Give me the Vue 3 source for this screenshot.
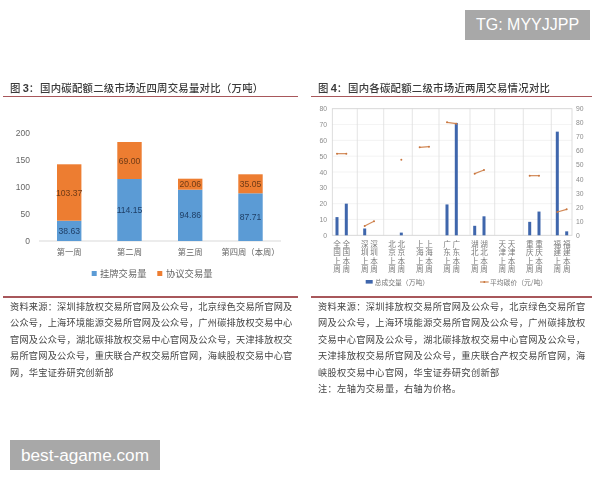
<script setup>
const ticks = [200, 150, 100, 50, 0]
const weeks = [
  { label: '第一周', cx: 69.2, top: 165.3, mid: 221.7, a: '38.63', b: '103.37' },
  { label: '第二周', cx: 129.5, top: 143, mid: 180, a: '114.15', b: '69.00' },
  { label: '第三周', cx: 190.2, top: 179.7, mid: 190.7, a: '94.86', b: '20.06' },
  { label: '第四周（本周）', cx: 250.5, top: 175.3, mid: 194.3, a: '87.71', b: '35.05' }
]
const base = 242

const plotTop = 109.7
const plotBottom = 236.3
const plotLeft = 332.3
const plotRight = 572
const unit = (plotBottom - plotTop) / 80
const leftTicks = [0, 10, 20, 30, 40, 50, 60, 70, 80]
const rightTicks = [0, 10, 20, 30, 40, 50, 60, 70, 80, 90]
const dividers = [357.3, 383.7, 412.3, 439, 470, 494.7, 523.3, 551.3]
const cities = ['全国', '深圳', '北京', '上海', '广东', '湖北', '天津', '重庆', '福建']
const cols = [
  [337, 11.5], [346.3, 20],
  [364.7, 4.3], [374, 0],
  [392, 0], [401.3, 1.7],
  [419.7, 0], [429, 0],
  [447, 19.5], [456.3, 71],
  [474.7, 6], [484, 12],
  [502.3, 0], [511.5, 0],
  [529.7, 8.5], [539, 15],
  [557.3, 65.5], [566.7, 2.5]
].map(([x, v], i) => {
  const city = cities[Math.floor(i / 2)]
  const week = i % 2 === 0 ? '上周' : '本周'
  return { x, h: v * unit, label: city + week }
})
const toX = (z) => z / 3 + 300
const toY = (z) => z / 3 + 70
const segments = [
  [111, 254, 139, 254],
  [194, 471, 222, 457],
  [359, 235, 387, 233],
  [441, 160, 469, 164],
  [524, 314, 552, 303],
  [689, 320, 717, 320],
  [772, 429, 800, 421]
].map(([a, b, c, d]) => ({ x1: toX(a), y1: toY(b), x2: toX(c), y2: toY(d) }))
const dots = [
  ...segments.flatMap((s) => [{ x: s.x1, y: s.y1 }, { x: s.x2, y: s.y2 }]),
  { x: toX(304), y: toY(272) }
]

const sourceLeft = [
  '资料来源：深圳排放权交易所官网及公众号，北京绿色交易所官网及',
  '公众号，上海环境能源交易所官网及公众号，广州碳排放权交易中心',
  '官网及公众号，湖北碳排放权交易中心官网及公众号，天津排放权交',
  '易所官网及公众号，重庆联合产权交易所官网，海峡股权交易中心官',
  '网，华宝证券研究创新部'
]
const sourceRight = [
  '资料来源：深圳排放权交易所官网及公众号，北京绿色交易所官',
  '网及公众号，上海环境能源交易所官网及公众号，广州碳排放权',
  '交易中心官网及公众号，湖北碳排放权交易中心官网及公众号，',
  '天津排放权交易所官网及公众号，重庆联合产权交易所官网，海',
  '峡股权交易中心官网，华宝证券研究创新部',
  '注：左轴为交易量，右轴为价格。'
]
</script>

<template>
  <div class="page">
    <section class="panel">
      <h2 class="title"><span class="prefix">图 <b>3</b>：</span>国内碳配额二级市场近四周交易量对比（万吨）</h2>
      <svg class="chart" viewBox="3 98 295 199" width="295" height="199">
        <text v-for="(t, i) in ticks" :key="t" class="tick" x="30" :y="137 + i * 27" text-anchor="end">{{ t }}</text>
        <line x1="39" x2="281" :y1="base" :y2="base" stroke="#d9d9d9" stroke-width="1" />
        <g v-for="w in weeks" :key="w.label">
          <rect :x="w.cx - 12.2" :y="w.mid" width="24.4" :height="base - w.mid" fill="#5b9bd5" />
          <rect :x="w.cx - 12.2" :y="w.top" width="24.4" :height="w.mid - w.top" fill="#ed7d31" />
          <text class="datum blue" :x="w.cx" :y="(w.mid + base) / 2 + 3" text-anchor="middle">{{ w.a }}</text>
          <text class="datum orange" :x="w.cx" :y="(w.top + w.mid) / 2 + 3" text-anchor="middle">{{ w.b }}</text>
          <text class="cat" :x="w.cx" y="256" text-anchor="middle">{{ w.label }}</text>
        </g>
        <rect x="91.7" y="272" width="5" height="5" fill="#5b9bd5" />
        <text class="legend" x="100" y="278">挂牌交易量</text>
        <rect x="157.3" y="272" width="5" height="5" fill="#ed7d31" />
        <text class="legend" x="166" y="278">协议交易量</text>
      </svg>
      <div class="rule-bottom"></div>
      <p class="source source-left"><span v-for="l in sourceLeft" :key="l" class="line">{{ l }}</span></p>
    </section>

    <section class="panel">
      <h2 class="title"><span class="prefix">图 <b>4</b>：</span>国内各碳配额二级市场近两周交易情况对比</h2>
      <svg class="chart" viewBox="311 98 281 199" width="281" height="199">
        <line v-for="t in leftTicks" :key="'g' + t" :x1="plotLeft" :x2="plotRight" :y1="plotBottom - t * unit" :y2="plotBottom - t * unit" stroke="#f0f0f0" stroke-width="0.8" />
        <line v-for="d in dividers" :key="d" :x1="d" :x2="d" :y1="plotTop" :y2="plotBottom" stroke="#dedede" stroke-width="0.8" />
        <rect :x="plotLeft" :y="plotTop" :width="plotRight - plotLeft" :height="plotBottom - plotTop" fill="none" stroke="#d4d4d4" stroke-width="0.8" />
        <text v-for="t in leftTicks" :key="'l' + t" class="axis" x="327" :y="plotBottom - t * unit + 2.5" text-anchor="end">{{ t }}</text>
        <text v-for="t in rightTicks" :key="'r' + t" class="axis" x="576" :y="plotBottom - (t * (plotBottom - plotTop)) / 90 + 2.5">{{ t }}</text>
        <g v-for="c in cols" :key="c.x">
          <rect v-if="c.h" :x="c.x - 1.5" :y="plotBottom - c.h" width="3" :height="c.h" fill="#3f66ac" />
          <text class="stack" :x="c.x" y="241.5">{{ c.label }}</text>
        </g>
        <line v-for="(s, i) in segments" :key="'s' + i" :x1="s.x1" :y1="s.y1" :x2="s.x2" :y2="s.y2" stroke="#d28a58" stroke-width="1.2" />
        <circle v-for="(d, i) in dots" :key="'d' + i" :cx="d.x" :cy="d.y" r="1" fill="#c9763f" />
        <rect x="365.7" y="281" width="7" height="3.6" fill="#3f66ac" />
        <text class="legend-small" x="374.7" y="285.5">总成交量（万吨）</text>
        <line x1="480" x2="488.7" y1="283" y2="283" stroke="#d28a58" stroke-width="1.2" />
        <circle cx="484.3" cy="283" r="1" fill="#c9763f" />
        <text class="legend-small" x="490" y="285.5">平均碳价（元/吨）</text>
      </svg>
      <div class="rule-bottom"></div>
      <p class="source source-right"><span v-for="l in sourceRight" :key="l" class="line">{{ l }}</span></p>
    </section>

    <div class="mark mark-top">TG: MYYJJPP</div>
    <div class="mark mark-bottom">best-agame.com</div>
  </div>
</template>

<style scoped>
.page {
  position: relative;
  width: 600px;
  height: 480px;
  box-sizing: border-box;
  padding: 80px 8px 0 3px;
  display: grid;
  grid-template-columns: 295px 281px;
  column-gap: 13px;
  align-items: start;
  overflow: hidden;
  background: #fff;
  font-family: "Noto Sans CJK SC", "Liberation Sans", sans-serif;
}
.panel {
  filter: blur(0.45px);
  min-width: 0;
}
.title {
  margin: 0;
  height: 16px;
  padding-left: 7px;
  border-bottom: 1.5px solid #a8575b;
  font-size: 10.4px;
  font-weight: 500;
  letter-spacing: 0.25px;
  line-height: 16px;
  color: #3a3a3a;
  white-space: nowrap;
}
.prefix {
  display: inline-block;
  width: 30px;
  letter-spacing: 0;
}
.prefix b {
  font-family: "Liberation Sans", sans-serif;
  font-size: 11px;
  font-weight: 700;
}
.chart {
  display: block;
}
.rule-bottom {
  height: 1.5px;
  background: #a8575b;
}
.source {
  margin: 0;
  padding-left: 7px;
  font-size: 9.2px;
  line-height: 16.5px;
  color: #444;
  white-space: nowrap;
}
.source-left {
  letter-spacing: 0.23px;
}
.source-right {
  letter-spacing: 0.37px;
}
.line {
  display: block;
}
.tick {
  font: 8.5px "Liberation Sans", sans-serif;
  fill: #666;
}
.datum {
  font: 8.6px "Liberation Sans", sans-serif;
}
.datum.blue {
  fill: #1f3f66;
}
.datum.orange {
  fill: #6e3a16;
}
.cat {
  font-size: 8.3px;
  fill: #666;
}
.legend {
  font-size: 9.3px;
  fill: #666;
}
.axis {
  font: 6.8px "Liberation Sans", sans-serif;
  fill: #8c8c8c;
}
.stack {
  font-size: 7.6px;
  letter-spacing: 0.65px;
  writing-mode: vertical-rl;
  fill: #7a7a7a;
}
.legend-small {
  font-size: 6.8px;
  fill: #777;
}
.mark {
  position: absolute;
  height: 30px;
  display: flex;
  align-items: center;
  justify-content: center;
  background: #a8a8a8;
  color: #fff;
  font-family: "Liberation Sans", sans-serif;
  font-size: 16px;
  white-space: nowrap;
}
.mark-top {
  top: 10px;
  left: 465px;
  width: 125px;
}
.mark-bottom {
  top: 440px;
  left: 10px;
  width: 150px;
  font-size: 17.2px;
}
</style>
